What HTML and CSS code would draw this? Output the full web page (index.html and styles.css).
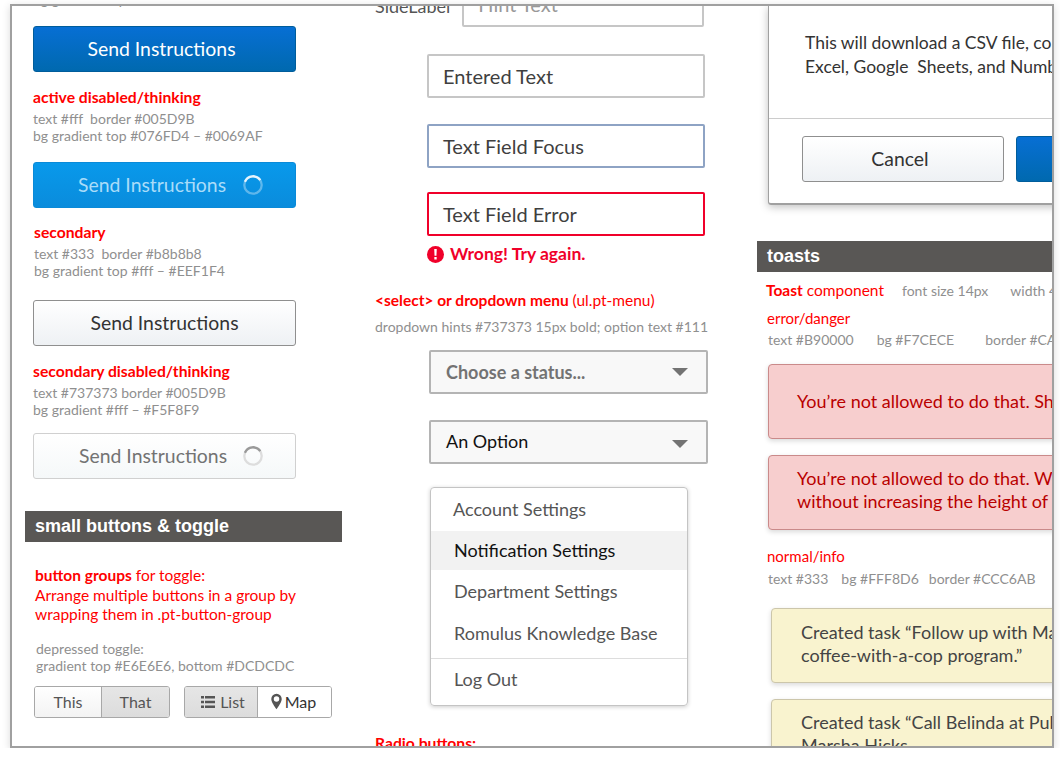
FILE: index.html
```html
<!DOCTYPE html>
<html lang="en">
<head>
    <meta charset="UTF-8">
    <title>Style guide</title>
    <link rel="stylesheet" href="styles.css">
</head>
<body>

<div class="frame">

    <div class="col col-buttons">
        <p class="note clipped-note">bg gradient top #076FD4 – #0069AF</p>
        <div class="btn btn-primary">Send Instructions</div>

        <h4 class="label">active disabled/thinking</h4>
        <p class="note">text #fff&nbsp; border #005D9B<br>bg gradient top #076FD4 – #0069AF</p>
        <div class="btn btn-primary-thinking">
            <span>Send Instructions</span>
            <svg class="spinner" viewBox="0 0 24 24"><circle cx="12" cy="12" r="9.5" fill="none" stroke="#fff" stroke-opacity=".35" stroke-width="2.5"/><path d="M3.2 8.5A9.5 9.5 0 0 1 20 6.8" fill="none" stroke="#fff" stroke-opacity=".85" stroke-width="2.5"/></svg>
        </div>

        <h4 class="label label-shift">secondary</h4>
        <p class="note note-shift">text #333&nbsp; border #b8b8b8<br>bg gradient top #fff – #EEF1F4</p>
        <div class="btn btn-secondary">Send Instructions</div>

        <h4 class="label">secondary disabled/thinking</h4>
        <p class="note">text #737373 border #005D9B<br>bg gradient #fff – #F5F8F9</p>
        <div class="btn btn-secondary-thinking">
            <span>Send Instructions</span>
            <svg class="spinner" viewBox="0 0 24 24"><circle cx="12" cy="12" r="9.5" fill="none" stroke="#ddd" stroke-width="2.5"/><path d="M3.2 8.5A9.5 9.5 0 0 1 20 6.8" fill="none" stroke="#999" stroke-width="2.5"/></svg>
        </div>

        <h3 class="section-bar bar-small">small buttons &amp; toggle</h3>

        <p class="red-text"><b>button groups</b> for toggle:<br>Arrange multiple buttons in a group by<br>wrapping them in .pt-button-group</p>
        <p class="note note-toggle">depressed toggle:<br>gradient top #E6E6E6, bottom #DCDCDC</p>

        <div class="toggle-row">
            <div class="btn-group group-text">
                <div class="seg seg-this">This</div>
                <div class="seg seg-that on">That</div>
            </div>
            <div class="btn-group group-icons">
                <div class="seg seg-list on">
                    <svg class="icon-list" viewBox="0 0 14 12"><path d="M0 0h3v2.6H0zM4 0h10v2.6H4zM0 4.7h3v2.6H0zM4 4.7h10v2.6H4zM0 9.4h3V12H0zM4 9.4h10V12H4z" fill="#555"/></svg>
                    List
                </div>
                <div class="seg seg-map">
                    <svg class="icon-pin" viewBox="0 0 12 17"><path fill-rule="evenodd" d="M6 0a5.7 5.7 0 0 1 5.7 5.7C11.700 9.200 8 14 6 17 4 14 .3 9.200.3 5.700A5.700 5.700 0 0 1 6 0zm0 2.700a3 3 0 1 0 0 6 3 3 0 0 0 0-6z" fill="#555"/></svg>
                    Map
                </div>
            </div>
        </div>
    </div>

    <div class="col col-fields">
        <div class="side-row">
            <span class="side-label">SideLabel</span>
            <div class="field field-hint">Hint Text</div>
        </div>
        <div class="field">Entered Text</div>
        <div class="field field-focus">Text Field Focus</div>
        <div class="field field-error">Text Field Error</div>
        <div class="error-msg">
            <svg class="icon-error" viewBox="0 0 16 16"><circle cx="8" cy="8" r="8" fill="#f0002a"/><path d="M6.800 2.800h2.400l-.3 6.400H7.100zM6.900 10.300h2.200v2.300H6.900z" fill="#fff"/></svg>
            Wrong! Try again.
        </div>

        <p class="select-title"><b>&lt;select&gt; or dropdown menu</b> (ul.pt-menu)</p>
        <p class="note select-note">dropdown hints #737373 15px bold; option text #111</p>

        <div class="select select-hint">Choose a status...<i class="caret"></i></div>
        <div class="select select-option">An Option<i class="caret"></i></div>

        <ul class="menu">
            <li class="menu-first">Account Settings</li>
            <li class="menu-active">Notification Settings</li>
            <li>Department Settings</li>
            <li>Romulus Knowledge Base</li>
            <li class="menu-last">Log Out</li>
        </ul>

        <h4 class="label radio-title">Radio buttons:</h4>
    </div>

    <div class="col col-toasts">
        <div class="modal">
            <p class="modal-text">This will download a CSV file, compatible with<br>Excel, Google&nbsp; Sheets, and Numbers.</p>
            <div class="modal-foot">
                <div class="btn btn-secondary btn-cancel">Cancel</div>
                <div class="btn btn-primary btn-ok">Download</div>
            </div>
        </div>

        <h3 class="section-bar bar-toasts">toasts</h3>
        <p class="toast-title"><span class="red-text"><b>Toast</b> component</span><span class="note">font size 14px</span><span class="note">width 400px</span></p>
        <p class="red-text sub-label">error/danger</p>
        <p class="note spec spec-wide"><span>text #B90000</span><span>bg #F7CECE</span><span>border #CA8A8A</span></p>

        <div class="toast toast-error toast-one">You’re not allowed to do that. Should you be?</div>
        <div class="toast toast-error">You’re not allowed to do that. We wrap long text<br>without increasing the height of the toast</div>

        <p class="red-text sub-label info-label">normal/info</p>
        <p class="note spec"><span>text #333</span><span>bg #FFF8D6</span><span>border #CCC6AB</span></p>

        <div class="toast toast-info">Created task “Follow up with Marsha about the<br>coffee-with-a-cop program.”</div>
        <div class="toast toast-info">Created task “Call Belinda at Public Works”<br>Marsha Hicks</div>
    </div>

</div>

</body>
</html>
```

FILE: styles.css
```css
body {
    margin: 0;
    background: #fff;
    font-family: Lato, "Open Sans", sans-serif;
    color: #333;
}
p, h3, h4, ul {
    margin: 0;
    padding: 0;
}

.frame {
    box-sizing: border-box;
    width: 1044px;
    height: 744px;
    margin: 4px 0 0 10px;
    border: 2px solid #a0a0a0;
    box-shadow: 0 2px 8px rgba(0, 0, 0, 0.15);
    overflow: hidden;
    display: grid;
    grid-template-columns: 345px 400px 1fr;
}
.col {
    min-width: 0;
}

/* left column */
.col-buttons {
    padding-left: 21px;
}
.clipped-note {
    margin-top: -15px;
    height: 17px;
}
.note {
    font-size: 14px;
    line-height: 17px;
    color: #8f8f8f;
}
.label {
    font-size: 15.700px;
    line-height: 18px;
    font-weight: 700;
    color: #f00;
    margin-top: 16px;
    margin-bottom: 4px;
}
.label-shift {
    margin-top: 15px;
    margin-left: 1px;
}
.note-shift {
    margin-left: 1px;
    margin-bottom: 21px;
}
.btn {
    box-sizing: border-box;
    width: 263px;
    height: 46px;
    border-radius: 3px;
    font-size: 19.400px;
    padding-bottom: 2px;
    display: flex;
    align-items: center;
    justify-content: center;
}
.note + .btn {
    margin-top: 18px;
}
.note-shift + .btn {
    margin-top: 0;
}
.note + .btn-secondary-thinking {
    margin-top: 15px;
}
.btn-primary {
    color: #fff;
    border: 1px solid #005d9b;
    background: linear-gradient(#076fd4, #0069af);
    padding-right: 6px;
}
.btn-primary-thinking {
    color: #a9dcf9;
    border: 1px solid #0a8ad8;
    background: linear-gradient(#0899eb, #0a8cdc);
    justify-content: flex-start;
    padding-left: 44px;
    gap: 16px;
}
.btn-secondary {
    color: #333;
    border: 1px solid #8f8f8f;
    background: linear-gradient(#fff, #eef1f4);
}
.btn-secondary-thinking {
    color: #737373;
    border: 1px solid #d0d0d0;
    background: linear-gradient(#fff, #f5f8f9);
    justify-content: flex-start;
    padding-left: 45px;
    gap: 15px;
}
.spinner {
    width: 22px;
    height: 22px;
    flex: none;
    margin-top: 2px;
}
.section-bar {
    background: #595755;
    color: #fff;
    font-family: "Liberation Sans", Arial, sans-serif;
    font-size: 18px;
    line-height: 31px;
    font-weight: bold;
    padding-left: 10px;
}
.bar-small {
    width: 317px;
    box-sizing: border-box;
    margin: 32px 0 0 -8px;
}
.red-text {
    color: #f00;
    font-size: 15.500px;
    line-height: 19.500px;
}
.col-buttons .red-text {
    margin: 24px 0 0 2px;
}
.red-text b {
    font-weight: 700;
}
.note-toggle {
    margin: 15px 0 0 3px;
}
.toggle-row {
    display: flex;
    gap: 14px;
    margin: 12px 0 0 1px;
}
.btn-group {
    display: flex;
    box-sizing: border-box;
    height: 32px;
    border: 1px solid #a8a8a8;
    border-radius: 3px;
    overflow: hidden;
    font-size: 16px;
}
.seg {
    display: flex;
    align-items: center;
    justify-content: center;
    background: linear-gradient(#fff, #f3f3f3);
    color: #555;
}
.seg.on {
    background: linear-gradient(#e6e6e6, #dcdcdc);
}
.seg-this { width: 66px; border-right: 1px solid #a8a8a8; }
.seg-that { width: 67px; }
.seg-list { width: 68px; padding-left: 4px; gap: 5px; border-right: 1px solid #a8a8a8; }
.seg-map { width: 71px; padding-right: 2px; gap: 3px; color: #333; background: #fff; }
.icon-list { width: 14px; height: 12px; }
.icon-pin { width: 11px; height: 17px; }

/* middle column */
.col-fields {
    padding-left: 18px;
}
.side-row {
    display: flex;
    align-items: flex-start;
    gap: 12px;
    height: 20px;
    color: #555;
}
.side-label {
    font-size: 18px;
    line-height: 20px;
    margin-top: -10px;
}
.field {
    box-sizing: border-box;
    width: 278px;
    height: 44px;
    margin: 28px 0 0 52px;
    border: 2px solid #c6c6c6;
    border-radius: 2px;
    font-size: 20px;
    line-height: 40px;
    padding-left: 14px;
    color: #3f3f3f;
}
.field-hint {
    width: 242px;
    height: 40px;
    margin: -19px 0 0 0;
    line-height: 30px;
    color: #999;
    flex: none;
}
.side-row + .field {
    margin-top: 28px;
}
.field-focus {
    margin-top: 26px;
    border-color: #8ea3c4;
}
.field-error {
    margin-top: 24px;
    border-color: #f0002a;
}
.error-msg {
    display: flex;
    align-items: center;
    gap: 6px;
    margin: 8px 0 0 52px;
    font-size: 17.500px;
    line-height: 20px;
    font-weight: 700;
    color: #f0002a;
}
.icon-error {
    width: 17px;
    height: 17px;
}
.select-title {
    margin-top: 27px;
    font-size: 15.500px;
    line-height: 19px;
    color: #f00;
}
.select-title b {
    font-weight: 700;
}
.select-note {
    margin-top: 8px;
}
.select {
    box-sizing: border-box;
    width: 279px;
    height: 44px;
    margin: 26px 0 0 54px;
    border: 2px solid #b4b4b4;
    border-radius: 2px;
    background: #f8f8f8;
    font-size: 18px;
    padding: 0 18px 0 15px;
    display: flex;
    align-items: center;
    justify-content: space-between;
}
.select-note + .select {
    margin-top: 15px;
}
.select-hint {
    color: #737373;
    font-weight: 700;
}
.select-option {
    color: #111;
    padding-bottom: 2px;
}
.select-option .caret {
    margin-top: 6px;
}
.caret {
    width: 0;
    height: 0;
    border-left: 8px solid transparent;
    border-right: 8px solid transparent;
    border-top: 8px solid #737373;
}
.menu {
    box-sizing: border-box;
    list-style: none;
    width: 258px;
    height: 219px;
    margin: 23px 0 0 55px;
    padding-top: 2px;
    border: 1px solid #c4c4c4;
    border-radius: 4px;
    box-shadow: 0 1px 4px rgba(0, 0, 0, 0.2);
    font-size: 18px;
    color: #555;
}
.menu li {
    line-height: 42px;
    padding-left: 23px;
}
.menu .menu-first {
    padding-left: 22px;
    line-height: 39px;
    margin-bottom: 2px;
}
.menu .menu-active {
    background: #f2f2f2;
    color: #111;
    line-height: 39px;
}
.menu .menu-last {
    margin-top: 4px;
    border-top: 1px solid #ddd;
    line-height: 40px;
}
.radio-title {
    margin: 28px 0 0;
}

/* right column */
.col-toasts {
    overflow: hidden;
}
.modal {
    box-sizing: border-box;
    width: 340px;
    height: 199px;
    margin: 0 0 0 11px;
    border: 1px solid #a0a0a0;
    border-width: 0 1px 2px 1px;
    border-radius: 0 0 3px 3px;
    box-shadow: 0 2px 8px rgba(0, 0, 0, 0.25);
}
.modal-text {
    font-size: 17.500px;
    line-height: 24px;
    color: #333;
    padding: 25px 0 0 36px;
    height: 87px;
    white-space: nowrap;
}
.modal-foot {
    display: flex;
    gap: 12px;
    border-top: 1px solid #ccc;
    padding: 17px 0 0 33px;
}
.btn-cancel {
    width: 202px;
    flex: none;
    padding-right: 6px;
}
.btn-ok {
    width: 200px;
    flex: none;
}
.bar-toasts {
    margin-top: 36px;
}
.toast-title {
    display: flex;
    align-items: baseline;
    margin: 9px 0 0 9px;
    white-space: nowrap;
}
.toast-title .note {
    margin-left: 18px;
}
.toast-title .note + .note {
    margin-left: 22px;
}
.sub-label {
    margin: 8px 0 0 10px;
    font-size: 15px;
}
.spec {
    display: flex;
    margin: 3px 0 0 11px;
    white-space: nowrap;
}
.spec span + span {
    margin-left: 13px;
}
.spec span + span + span {
    margin-left: 10px;
}
.spec-wide span + span {
    margin-left: 23px;
}
.spec-wide span + span + span {
    margin-left: 31px;
}
.toast {
    box-sizing: border-box;
    width: 400px;
    height: 75px;
    margin: 16px 0 0 11px;
    padding: 11px 0 0 28px;
    border: 1px solid;
    border-radius: 4px;
    box-shadow: 0 2px 5px rgba(0, 0, 0, 0.15);
    font-size: 18px;
    line-height: 23px;
    white-space: nowrap;
}
.toast-one {
    padding-top: 25px;
}
.toast-error {
    color: #b90000;
    background: #f7cece;
    border-color: #ca8a8a;
}
.toast-info {
    color: #444;
    background: #f9f3cf;
    border-color: #ccc6ab;
    margin-left: 14px;
    padding-left: 29px;
}
.info-label {
    margin-top: 17px;
}
.spec + .toast-info {
    margin-top: 21px;
    padding-top: 12px;
}
```
